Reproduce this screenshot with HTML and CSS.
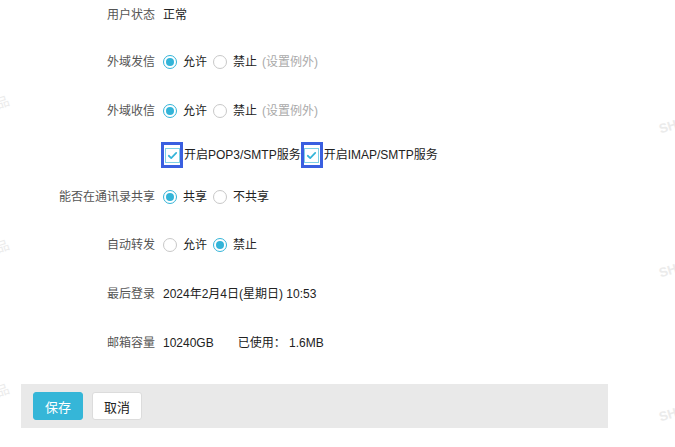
FILE: index.html
```html
<!DOCTYPE html>
<html lang="zh-CN">
<head>
<meta charset="utf-8">
<title>邮箱设置</title>
<link rel="stylesheet" href="styles.css">
</head>
<body>
<div class="page">
  <div class="form">
    <div class="row r1">
      <span class="label">用户状态</span>
      <span class="value">正常</span>
    </div>
    <div class="row r2">
      <span class="label">外域发信</span>
      <span class="value opts">
        <span class="radio on"></span><span class="opt">允许</span>
        <span class="radio"></span><span class="opt">禁止</span>
        <span class="hint">(设置例外)</span>
      </span>
    </div>
    <div class="row r3">
      <span class="label">外域收信</span>
      <span class="value opts">
        <span class="radio on"></span><span class="opt">允许</span>
        <span class="radio"></span><span class="opt">禁止</span>
        <span class="hint">(设置例外)</span>
      </span>
    </div>
    <div class="row r4">
      <span class="label"></span>
      <span class="checks">
        <span class="focus"><span class="cbox"><svg viewBox="0 0 15 15" width="15" height="15"><path d="M3.2 7.8 L6 10.4 L11.8 4.6" fill="none" stroke="#33b4d8" stroke-width="2" stroke-linecap="round" stroke-linejoin="round"/></svg></span></span><span class="ctext">开启POP3/SMTP服务</span><span class="focus"><span class="cbox"><svg viewBox="0 0 15 15" width="15" height="15"><path d="M3.2 7.8 L6 10.4 L11.8 4.6" fill="none" stroke="#33b4d8" stroke-width="2" stroke-linecap="round" stroke-linejoin="round"/></svg></span></span><span class="ctext">开启IMAP/SMTP服务</span>
      </span>
    </div>
    <div class="row r5">
      <span class="label">能否在通讯录共享</span>
      <span class="value opts">
        <span class="radio on"></span><span class="opt">共享</span>
        <span class="radio"></span><span class="opt">不共享</span>
      </span>
    </div>
    <div class="row r6">
      <span class="label">自动转发</span>
      <span class="value opts">
        <span class="radio"></span><span class="opt">允许</span>
        <span class="radio on"></span><span class="opt">禁止</span>
      </span>
    </div>
    <div class="row r7">
      <span class="label">最后登录</span>
      <span class="value">2024年2月4日(星期日) 10:53</span>
    </div>
    <div class="row r8">
      <span class="label">邮箱容量</span>
      <span class="value">10240GB<span class="used">已使用：&nbsp;1.6MB</span></span>
    </div>
  </div>
  <div class="footer">
    <button class="btn primary">保存</button>
    <button class="btn">取消</button>
  </div>
  <div class="wm wm-r1">SH</div>
  <div class="wm wm-r2">SH</div>
  <div class="wm wm-r3">SH</div>
  <div class="wm wm-l1">品</div>
  <div class="wm wm-l2">品</div>
  <div class="wm wm-l3">品</div>
</div>
</body>
</html>
```

FILE: styles.css
```css
* { box-sizing: border-box; }
html, body {
  margin: 0;
  padding: 0;
  background: #fff;
}
body {
  font-family: "Liberation Sans", "Noto Sans CJK SC", sans-serif;
  font-size: 12px;
  color: #222;
  overflow: hidden;
}
.page {
  position: relative;
  width: 675px;
  height: 447px;
  overflow: hidden;
}
.form {
  padding-top: 5px;
}
.row {
  display: flex;
  align-items: center;
  height: 20px;
  line-height: 20px;
}
.r2 { margin-top: 27px; }
.r3 { margin-top: 29px; }
.r4 { margin-top: 21px; height: 26px; }
.r5 { margin-top: 19px; }
.r6 { margin-top: 28px; }
.r7 { margin-top: 29px; }
.r8 { margin-top: 29px; }
.label {
  width: 155px;
  flex: none;
  text-align: right;
  color: #555;
}
.value {
  margin-left: 8px;
  color: #222;
}
.opts {
  display: flex;
  align-items: center;
}
.radio {
  width: 14px;
  height: 14px;
  border: 1px solid #c8c8c8;
  border-radius: 50%;
  background: #fff;
  position: relative;
  flex: none;
}
.radio.on {
  border-color: #33b4d8;
}
.radio.on::after {
  content: "";
  position: absolute;
  left: 2px;
  top: 2px;
  width: 8px;
  height: 8px;
  border-radius: 50%;
  background: #33b4d8;
}
.opt {
  margin-left: 6px;
  margin-right: 6px;
}
.hint {
  color: #aaa;
  margin-left: -1px;
}
.checks {
  display: flex;
  align-items: center;
  margin-left: 6px;
}
.focus {
  width: 22px;
  height: 26px;
  border: 3px solid #3a5fe0;
  display: flex;
  align-items: center;
  justify-content: center;
  flex: none;
}
.cbox {
  width: 15px;
  height: 15px;
  border: 1px solid #7fd0e6;
  background: #fff;
  display: flex;
  align-items: center;
  justify-content: center;
}
.cbox svg { display: block; }
.ctext {
  margin-left: 1px;
  color: #222;
}
.used {
  margin-left: 24px;
}
.footer {
  margin-top: 31px;
  margin-left: 21px;
  width: 587px;
  height: 44px;
  background: #e9e9e9;
  padding: 8px 12px;
  display: flex;
  gap: 9px;
}
.btn {
  width: 50px;
  height: 28px;
  border: 1px solid #dcdcdc;
  border-radius: 3px;
  background: #fff;
  color: #222;
  font-family: "Liberation Sans", "Noto Sans CJK SC", sans-serif;
  font-size: 13px;
  padding: 0;
}
.btn.primary {
  background: #35b6d8;
  border-color: #35b6d8;
  color: #fff;
}
.wm {
  position: absolute;
  color: #ebebeb;
  font-size: 13px;
  font-weight: bold;
  transform: rotate(-18deg);
  pointer-events: none;
}
.wm-r1 { left: 659px; top: 119px; }
.wm-r2 { left: 659px; top: 263px; }
.wm-r3 { left: 659px; top: 407px; }
.wm-l1 { left: -4px; top: 92px; font-weight: normal; }
.wm-l2 { left: -4px; top: 236px; font-weight: normal; }
.wm-l3 { left: -4px; top: 380px; font-weight: normal; }
```
